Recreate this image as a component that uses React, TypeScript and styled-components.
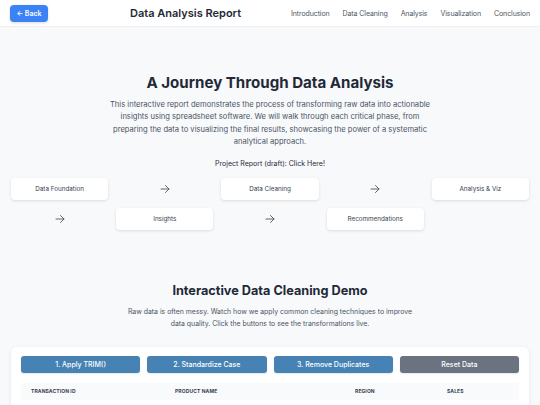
import React from 'react';
import styled, { createGlobalStyle } from 'styled-components';

const GlobalStyle = createGlobalStyle`
  * { box-sizing: border-box; }
  body {
    margin: 0;
    background: #f8f9fb;
    font-family: Inter, "Noto Sans", Arial, sans-serif;
    color: #1f2937;
  }
`;

const ArrowIcon = () => (
  <svg width="12" height="12" viewBox="0 0 24 24" fill="none" stroke="currentColor" strokeWidth="1.8" strokeLinecap="round" strokeLinejoin="round">
    <path d="M4 12h16" />
    <path d="M13 5l7 7-7 7" />
  </svg>
);

const Header = styled.header`
  height: 27px;
  display: flex;
  align-items: center;
  padding: 0 10px;
  background: #ffffff;
  border-bottom: 1px solid #eceef1;
`;
const BackButton = styled.button`
  height: 17px;
  width: 38px;
  border: none;
  border-radius: 4px;
  background: #3b82f6;
  color: #ffffff;
  font-family: inherit;
  font-size: 7px;
  font-weight: 600;
  padding: 0;
  box-shadow: 0 1px 3px rgb(0 0 0 / 0.15);
`;
const HeaderTitle = styled.h1`
  margin: 0 0 0 82px;
  font-size: 11px;
  font-weight: 600;
  color: #1f2937;
`;
const Nav = styled.nav`
  margin-left: auto;
  display: flex;
  gap: 13px;
`;
const NavItem = styled.span`
  font-size: 7px;
  letter-spacing: -0.1px;
  color: #4b5563;
  cursor: pointer;
`;

const Hero = styled.section`
  padding: 46px 10px 0;
  text-align: center;
`;
const HeroTitle = styled.h2`
  margin: 0;
  font-size: 15.1px;
  font-weight: 700;
  color: #1f2937;
  line-height: 20px;
`;
const Lead = styled.p<{ $width: number; $size: number }>`
  margin: 6px auto 0;
  max-width: ${({ $width }) => $width}px;
  font-size: ${({ $size }) => $size}px;
  line-height: 12.3px;
  color: #4b5563;
`;
const ReportLink = styled.p`
  margin: 11px 0 0;
  font-size: 7px;
  color: #1f2937;
`;

const FlowGrid = styled.div`
  display: grid;
  grid-template-columns: repeat(5, 1fr);
  column-gap: 8px;
  row-gap: 8px;
  padding: 10px 11px 0;
`;
const FlowBox = styled.div`
  height: 22px;
  display: flex;
  align-items: center;
  justify-content: center;
  background: #ffffff;
  border-radius: 4px;
  box-shadow: 0 1px 3px rgb(0 0 0 / 0.12);
  font-size: 6.3px;
  color: #374151;
`;
const FlowArrow = styled.div`
  height: 22px;
  display: flex;
  align-items: center;
  justify-content: center;
  color: #4b5563;
`;

const Section = styled.section`
  padding: 52px 11px 0;
  text-align: center;
`;
const SectionTitle = styled.h2`
  margin: 0;
  font-size: 12.7px;
  font-weight: 700;
  color: #1f2937;
  line-height: 18px;
`;

const Card = styled.div`
  margin-top: 16px;
  background: #ffffff;
  border-radius: 6px;
  box-shadow: 0 1px 4px rgb(0 0 0 / 0.08);
  padding: 9px 10px 10px;
`;
const ButtonRow = styled.div`
  display: grid;
  grid-template-columns: repeat(4, 1fr);
  gap: 7px;
`;
const ActionButton = styled.button<{ $variant?: 'primary' | 'muted' }>`
  height: 17px;
  border: none;
  border-radius: 3px;
  background: ${({ $variant }) => ($variant === 'muted' ? '#6b7280' : '#4682b4')};
  color: #ffffff;
  font-family: inherit;
  font-size: 7px;
  font-weight: 500;
  box-shadow: 0 1px 2px rgb(0 0 0 / 0.1);
`;
const Table = styled.table`
  margin-top: 10px;
  width: 100%;
  border-collapse: collapse;
  text-align: left;
`;
const Th = styled.th`
  height: 17px;
  padding: 0 10px;
  background: #f9fafb;
  font-size: 5px;
  font-weight: 700;
  text-transform: uppercase;
  color: #374151;
  letter-spacing: 0.1px;
`;

const navItems = ['Introduction', 'Data Cleaning', 'Analysis', 'Visualization', 'Conclusion'];

export default function App() {
  return (
    <>
      <GlobalStyle />
      <Header>
        <BackButton>← Back</BackButton>
        <HeaderTitle>Data Analysis Report</HeaderTitle>
        <Nav>
          {navItems.map(item => (
            <NavItem key={item}>{item}</NavItem>
          ))}
        </Nav>
      </Header>

      <Hero>
        <HeroTitle>A Journey Through Data Analysis</HeroTitle>
        <Lead $width={330} $size={7.6}>
          This interactive report demonstrates the process of transforming raw data into actionable
          insights using spreadsheet software. We will walk through each critical phase, from
          preparing the data to visualizing the final results, showcasing the power of a systematic
          analytical approach.
        </Lead>
        <ReportLink>Project Report (draft): Click Here!</ReportLink>
      </Hero>

      <FlowGrid>
        <FlowBox>Data Foundation</FlowBox>
        <FlowArrow><ArrowIcon /></FlowArrow>
        <FlowBox>Data Cleaning</FlowBox>
        <FlowArrow><ArrowIcon /></FlowArrow>
        <FlowBox>Analysis &amp; Viz</FlowBox>
        <FlowArrow><ArrowIcon /></FlowArrow>
        <FlowBox>Insights</FlowBox>
        <FlowArrow><ArrowIcon /></FlowArrow>
        <FlowBox>Recommendations</FlowBox>
      </FlowGrid>

      <Section>
        <SectionTitle>Interactive Data Cleaning Demo</SectionTitle>
        <Lead $width={300} $size={6.9}>
          Raw data is often messy. Watch how we apply common cleaning techniques to improve
          data quality. Click the buttons to see the transformations live.
        </Lead>
        <Card>
          <ButtonRow>
            <ActionButton>1. Apply TRIM()</ActionButton>
            <ActionButton>2. Standardize Case</ActionButton>
            <ActionButton>3. Remove Duplicates</ActionButton>
            <ActionButton $variant="muted">Reset Data</ActionButton>
          </ButtonRow>
          <Table>
            <thead>
              <tr>
                <Th style={{ width: 144 }}>Transaction ID</Th>
                <Th style={{ width: 180 }}>Product Name</Th>
                <Th style={{ width: 92 }}>Region</Th>
                <Th>Sales</Th>
              </tr>
            </thead>
          </Table>
        </Card>
      </Section>
    </>
  );
}
